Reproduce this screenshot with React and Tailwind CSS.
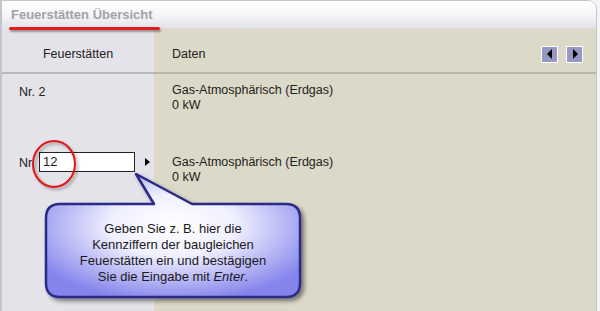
const rows = [
  { nr: "2", type: "Gas-Atmosphärisch (Erdgas)", power: "0 kW" },
  { nr: "12", type: "Gas-Atmosphärisch (Erdgas)", power: "0 kW", editing: true }
]

const NavButton = ({ dir }) => (
  <div className="flex h-[17px] w-[17px] items-center justify-center border border-white bg-[#9898c6]">
    <svg width="6" height="10" viewBox="0 0 6 10">
      <path d={dir === "left" ? "M5 0 L0 5 L5 10 Z" : "M1 0 L6 5 L1 10 Z"} fill="#000" />
    </svg>
  </div>
)

const Callout = () => (
  <>
    <svg className="pointer-events-none absolute left-0 top-0" width="600" height="311">
      <defs>
        <radialGradient id="fill" cx="50%" cy="42%" r="62%">
          <stop offset="0%" stopColor="#ffffff" />
          <stop offset="40%" stopColor="#f0f0ff" />
          <stop offset="100%" stopColor="#8484ec" />
        </radialGradient>
        <filter id="shadow" x="-10%" y="-10%" width="130%" height="130%">
          <feDropShadow dx="3" dy="3" stdDeviation="2" floodColor="#000" floodOpacity="0.45" />
        </filter>
        <filter id="soft" x="-30%" y="-30%" width="160%" height="160%">
          <feDropShadow dx="2" dy="2" stdDeviation="1.5" floodColor="#000" floodOpacity="0.35" />
        </filter>
      </defs>
      <ellipse cx="54" cy="164" rx="21" ry="23" fill="none" stroke="#e01818" strokeWidth="2" filter="url(#soft)" />
      <path
        d="M60 204 L154 204 L136 174 L192 204 L286 204 Q300 204 300 218 L300 283 Q300 297 286 297 L60 297 Q46 297 46 283 L46 218 Q46 204 60 204 Z"
        fill="url(#fill)"
        stroke="#2b2b88"
        strokeWidth="2.5"
        strokeLinejoin="round"
        filter="url(#shadow)"
      />
    </svg>
    <div className="absolute left-[46px] top-[221px] w-[254px] text-center text-[13px] leading-[16px] text-[#1a1a1a]">
      Geben Sie z. B. hier die
      <br />
      Kennziffern der baugleichen
      <br />
      Feuerstätten ein und bestägigen
      <br />
      Sie die Eingabe mit <i>Enter</i>.
    </div>
  </>
)

export default function App() {
  return (
    <div className="relative h-[311px] w-[600px] overflow-hidden bg-[#f4f4f6] font-['Liberation_Sans',Arial,sans-serif] text-[12.5px] text-[#222]">
      <div className="flex h-full w-[597px] flex-col overflow-hidden rounded-tr-[9px] border-l-2 border-r border-t border-[#c4c4cc]">
        <div className="flex h-[27px] items-center bg-gradient-to-b from-[#ffffff] via-[#f6f6f9] to-[#e2e2ea] pl-[9px]">
          <span className="text-[13px] font-bold text-[#a2a2a6]">Feuerstätten Übersicht</span>
        </div>
        <div className="flex flex-1">
          <div className="flex w-[152px] flex-col bg-[#e3e3e9]">
            <div className="flex h-[46px] items-center justify-center border-b-2 border-[#b8b8bc] pt-[9px]">Feuerstätten</div>
            {rows.map((row) =>
              row.editing ? (
                <div key={row.nr} className="flex h-[52px] items-start pl-[17px] pt-[6px]">
                  <span className="mt-[2px]">N</span>
                  <span className="mr-[4px] mt-[2px]">r.</span>
                  <div className="flex h-[20px] w-[96px] items-center border border-[#222] bg-white pl-[3px] text-[13px]">{row.nr}</div>
                  <svg className="ml-[10px] mt-[6px]" width="5" height="8" viewBox="0 0 5 8">
                    <path d="M0 0 L5 4 L0 8 Z" fill="#000" />
                  </svg>
                </div>
              ) : (
                <div key={row.nr} className="h-[72px] pl-[17px] pt-[9px]">Nr. {row.nr}</div>
              )
            )}
          </div>
          <div className="flex flex-1 flex-col bg-[#dcd9c8]">
            <div className="flex h-[46px] items-center justify-between border-b-2 border-[#b8b6aa] pl-[18px] pr-[13px] pt-[8px]">
              <span>Daten</span>
              <div className="flex gap-[8px]">
                <NavButton dir="left" />
                <NavButton dir="right" />
              </div>
            </div>
            {rows.map((row) => (
              <div key={row.nr} className={`${row.editing ? "h-[60px]" : "h-[72px]"} pl-[18px] pt-[9px] leading-[15px]`}>
                <div>{row.type}</div>
                <div>{row.power}</div>
              </div>
            ))}
          </div>
        </div>
      </div>
      <div className="absolute left-[9px] top-[27px] h-[3px] w-[151px] rounded-full bg-[#e51a1a] shadow-[1px_2px_2px_rgba(0,0,0,0.35)]" />
      <Callout />
    </div>
  )
}
